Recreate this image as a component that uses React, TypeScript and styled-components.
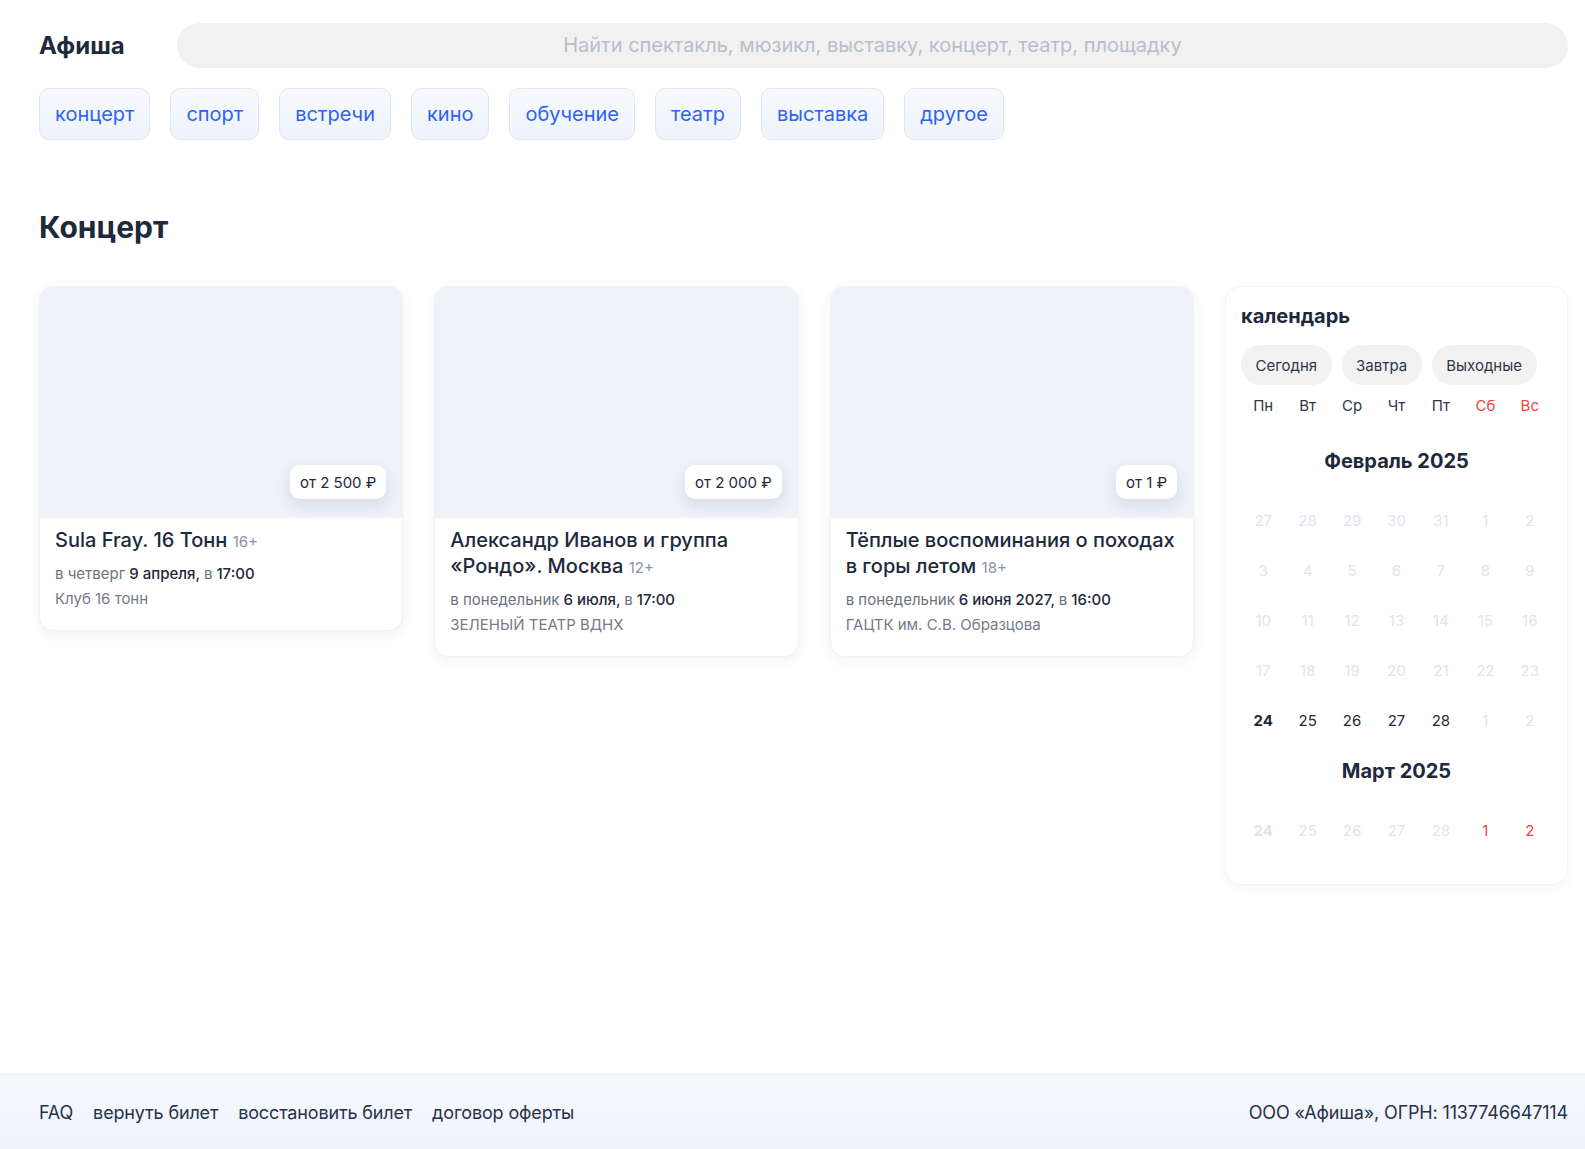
import React from "react";
import styled, { createGlobalStyle } from "styled-components";

const GlobalStyle = createGlobalStyle`
  * {
    box-sizing: border-box;
  }
  body {
    margin: 0;
    background: #ffffff;
    font-family: Inter, "Noto Sans", sans-serif;
    color: #1e293b;
  }
`;

interface IEvent {
  id: number;
  title: string;
  age: string;
  weekday: string;
  date: string;
  time: string;
  place: string;
  price: string;
}

const events: IEvent[] = [
  {
    id: 1,
    title: "Sula Fray. 16 Тонн",
    age: "16+",
    weekday: "в четверг",
    date: "9 апреля",
    time: "17:00",
    place: "Клуб 16 тонн",
    price: "от 2 500 ₽",
  },
  {
    id: 2,
    title: "Александр Иванов и группа «Рондо». Москва",
    age: "12+",
    weekday: "в понедельник",
    date: "6 июля",
    time: "17:00",
    place: "ЗЕЛЕНЫЙ ТЕАТР ВДНХ",
    price: "от 2 000 ₽",
  },
  {
    id: 3,
    title: "Тёплые воспоминания о походах в горы летом",
    age: "18+",
    weekday: "в понедельник",
    date: "6 июня 2027",
    time: "16:00",
    place: "ГАЦТК им. С.В. Образцова",
    price: "от 1 ₽",
  },
];

const categories = [
  "концерт",
  "спорт",
  "встречи",
  "кино",
  "обучение",
  "театр",
  "выставка",
  "другое",
];

const weekDays = ["Пн", "Вт", "Ср", "Чт", "Пт", "Сб", "Вс"];

type DayKind = "muted" | "active" | "today" | "mutedToday" | "weekend";

interface IDay {
  label: string;
  kind: DayKind;
}

function makeRow(labels: string[], kinds: DayKind[]): IDay[] {
  return labels.map((label, i) => ({ label, kind: kinds[i] }));
}

const allMuted: DayKind[] = Array(7).fill("muted");

const february: IDay[][] = [
  makeRow(["27", "28", "29", "30", "31", "1", "2"], allMuted),
  makeRow(["3", "4", "5", "6", "7", "8", "9"], allMuted),
  makeRow(["10", "11", "12", "13", "14", "15", "16"], allMuted),
  makeRow(["17", "18", "19", "20", "21", "22", "23"], allMuted),
  makeRow(
    ["24", "25", "26", "27", "28", "1", "2"],
    ["today", "active", "active", "active", "active", "muted", "muted"]
  ),
];

const march: IDay[][] = [
  makeRow(
    ["24", "25", "26", "27", "28", "1", "2"],
    ["mutedToday", "muted", "muted", "muted", "muted", "weekend", "weekend"]
  ),
];

const App: React.FC = () => {
  return (
    <>
      <GlobalStyle />
      <Page>
        <Main>
          <Header>
            <Logo>Афиша</Logo>
            <Search placeholder="Найти спектакль, мюзикл, выставку, концерт, театр, площадку" />
          </Header>

          <Tags>
            {categories.map((name) => (
              <Tag key={name}>{name}</Tag>
            ))}
          </Tags>

          <SectionTitle>Концерт</SectionTitle>

          <Content>
            {events.map((event) => (
              <Card key={event.id}>
                <Cover>
                  <Price>{event.price}</Price>
                </Cover>
                <CardBody>
                  <CardTitle>
                    {event.title} <Age>{event.age}</Age>
                  </CardTitle>
                  <Meta>
                    <Muted>{event.weekday}</Muted> {event.date},{" "}
                    <Muted>в</Muted> {event.time}
                  </Meta>
                  <Place>{event.place}</Place>
                </CardBody>
              </Card>
            ))}

            <Calendar>
              <CalendarTitle>календарь</CalendarTitle>
              <Pills>
                <Pill>Сегодня</Pill>
                <Pill>Завтра</Pill>
                <Pill>Выходные</Pill>
              </Pills>
              <WeekRow>
                {weekDays.map((d, i) => (
                  <WeekDay key={d} $weekend={i > 4}>
                    {d}
                  </WeekDay>
                ))}
              </WeekRow>

              <Month>
                <MonthTitle>Февраль 2025</MonthTitle>
                {february.map((row, r) => (
                  <DaysRow key={r}>
                    {row.map((day, i) => (
                      <Day key={i} $kind={day.kind}>
                        {day.label}
                      </Day>
                    ))}
                  </DaysRow>
                ))}
              </Month>

              <Month>
                <MonthTitle>Март 2025</MonthTitle>
                {march.map((row, r) => (
                  <DaysRow key={r}>
                    {row.map((day, i) => (
                      <Day key={i} $kind={day.kind}>
                        {day.label}
                      </Day>
                    ))}
                  </DaysRow>
                ))}
              </Month>
            </Calendar>
          </Content>
        </Main>

        <Footer>
          <FooterLinks>
            <FooterLink>FAQ</FooterLink>
            <FooterLink>вернуть билет</FooterLink>
            <FooterLink>восстановить билет</FooterLink>
            <FooterLink>договор оферты</FooterLink>
          </FooterLinks>
          <FooterLink>ООО «Афиша», ОГРН: 1137746647114</FooterLink>
        </Footer>
      </Page>
    </>
  );
};

const Page = styled.div`
  min-height: 100vh;
  display: flex;
  flex-direction: column;
`;

const Main = styled.main`
  flex: 1;
  padding: 23px 17px 40px 39px;
`;

const Header = styled.header`
  display: flex;
  align-items: center;
  gap: 52px;
`;

const Logo = styled.div`
  font-size: 24px;
  font-weight: 700;
  color: #1e293b;
  white-space: nowrap;
`;

const Search = styled.input`
  flex: 1;
  height: 45px;
  padding: 0 0 2px;
  border: none;
  outline: none;
  border-radius: 23px;
  background: #f1f1f1;
  font-family: Inter, sans-serif;
  font-size: 20px;
  text-align: center;
  color: #1e293b;

  &::placeholder {
    color: #b7bfcd;
  }
`;

const Tags = styled.nav`
  display: flex;
  gap: 20px;
  margin-top: 20px;
`;

const Tag = styled.button`
  height: 52px;
  padding: 0 15px;
  border: 1px solid #dfe6f1;
  border-radius: 10px;
  background: linear-gradient(180deg, #f7f9fc 0%, #eef4fd 100%);
  font-family: Inter, sans-serif;
  font-size: 20px;
  color: #2d62f2;
  cursor: pointer;
`;

const SectionTitle = styled.h1`
  margin: 69px 0 0;
  font-size: 30px;
  line-height: 36px;
  font-weight: 700;
  color: #1e293b;
`;

const Content = styled.section`
  display: grid;
  grid-template-columns: repeat(3, 1fr) 343px;
  gap: 31px;
  align-items: start;
  margin-top: 41px;
`;

const Card = styled.article`
  border-radius: 14px;
  overflow: hidden;
  background: #ffffff;
  border: 1px solid #eef1f6;
  box-shadow: 0 4px 14px rgba(30, 50, 90, 0.06);
`;

const Cover = styled.div`
  position: relative;
  height: 231px;
  background: #eff2f7;
`;

const Price = styled.span`
  position: absolute;
  right: 16px;
  bottom: 19px;
  height: 34px;
  padding: 0 10px;
  display: flex;
  align-items: center;
  border-radius: 10px;
  background: #ffffff;
  font-size: 15px;
  color: #1e293b;
  box-shadow: 0 6px 16px rgba(40, 70, 140, 0.14);
`;

const CardBody = styled.div`
  padding: 9px 15px 19px;
`;

const CardTitle = styled.h3`
  margin: 0;
  font-size: 20px;
  line-height: 26px;
  font-weight: 500;
  color: #1e293b;
`;

const Age = styled.span`
  font-size: 15px;
  line-height: 1;
  font-weight: 400;
  color: #8a93a3;
`;

const Meta = styled.div`
  margin-top: 8px;
  font-size: 15px;
  line-height: 25px;
  font-weight: 500;
  color: #1e293b;
`;

const Muted = styled.span`
  font-weight: 400;
  color: #6b7280;
`;

const Place = styled.div`
  font-size: 15px;
  line-height: 25px;
  color: #737b8a;
`;

const Calendar = styled.aside`
  padding: 16px 15px 29px;
  border-radius: 16px;
  border: 1px solid #f2f4fa;
  background: #ffffff;
  box-shadow: 0 4px 14px rgba(30, 50, 90, 0.04);
`;

const CalendarTitle = styled.h2`
  margin: 0;
  font-size: 20px;
  line-height: 26px;
  font-weight: 700;
  color: #1e293b;
`;

const Pills = styled.div`
  display: flex;
  gap: 10px;
  margin-top: 16px;
`;

const Pill = styled.button`
  height: 40px;
  padding: 0 14.5px;
  border: none;
  border-radius: 20px;
  background: #f2f2f2;
  font-family: Inter, sans-serif;
  font-size: 15px;
  color: #2d3748;
  cursor: pointer;
`;

const WeekRow = styled.div`
  display: grid;
  grid-template-columns: repeat(7, 1fr);
  margin-top: 11px;
`;

const WeekDay = styled.span<{ $weekend: boolean }>`
  text-align: center;
  font-size: 15px;
  line-height: 20px;
  color: ${(p) => (p.$weekend ? "#ef4444" : "#2d3748")};
`;

const Month = styled.div`
  margin-top: 31px;

  & + & {
    margin-top: 12px;
  }
`;

const MonthTitle = styled.h3`
  margin: 0 0 20px;
  text-align: center;
  font-size: 20px;
  line-height: 28px;
  font-weight: 700;
  color: #1e293b;
`;

const DaysRow = styled.div`
  display: grid;
  grid-template-columns: repeat(7, 1fr);
  height: 50px;
  align-items: center;
`;

const dayColors: Record<DayKind, string> = {
  muted: "#e0e4ed",
  mutedToday: "#e0e4ed",
  active: "#1e293b",
  today: "#1e293b",
  weekend: "#ef4444",
};

const Day = styled.span<{ $kind: DayKind }>`
  text-align: center;
  font-size: 15px;
  font-weight: ${(p) =>
    p.$kind === "today" || p.$kind === "mutedToday" ? 700 : 400};
  color: ${(p) => dayColors[p.$kind]};
`;

const Footer = styled.footer`
  height: 75px;
  padding: 0 17px 0 39px;
  display: flex;
  align-items: center;
  justify-content: space-between;
  border-top: 1px solid #eaeef4;
  background: linear-gradient(180deg, #f6f8fb 0%, #eff4fd 100%);
`;

const FooterLinks = styled.div`
  display: flex;
  gap: 20px;
`;

const FooterLink = styled.span`
  font-size: 18px;
  letter-spacing: -0.15px;
  color: #27324a;
`;

export default App;
